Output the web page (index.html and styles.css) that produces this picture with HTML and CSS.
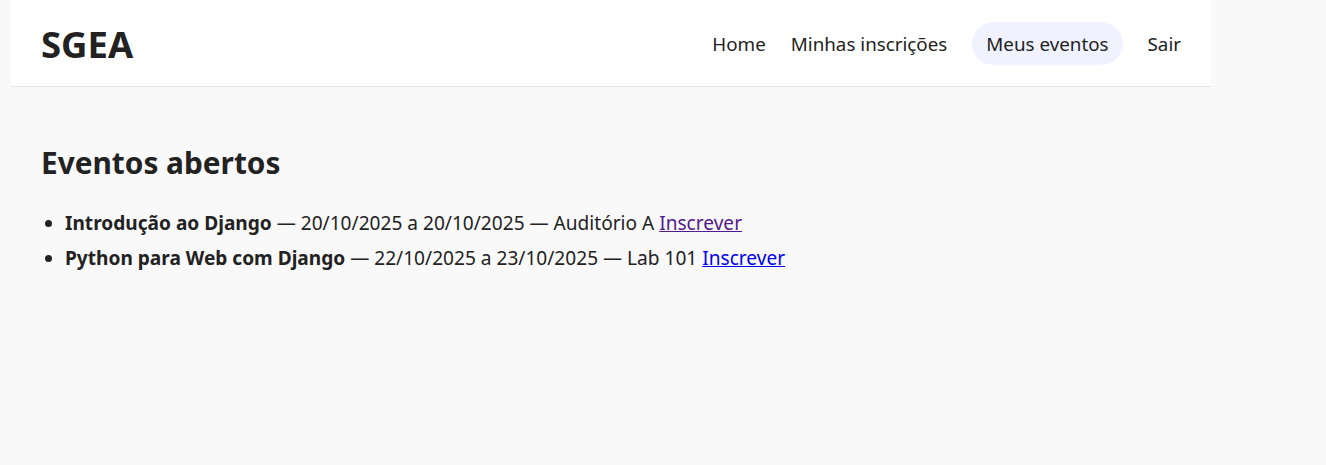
FILE: index.html
```html
<!DOCTYPE html>
<html lang="pt-BR">
<head>
<meta charset="utf-8">
<title>SGEA</title>
<link rel="stylesheet" href="styles.css">
</head>
<body>
<div class="page">
  <header class="topbar">
    <div class="brand">SGEA</div>
    <nav class="nav">
      <a class="nav-link" href="#">Home</a>
      <a class="nav-link" href="#">Minhas inscrições</a>
      <a class="nav-link active" href="#">Meus eventos</a>
      <a class="nav-link" href="#">Sair</a>
    </nav>
  </header>
  <main class="content">
    <h1 class="title">Eventos abertos</h1>
    <ul class="events">
      <li><strong>Introdução ao Django</strong> — 20/10/2025 a 20/10/2025 — Auditório A <a class="link visited" href="#">Inscrever</a></li>
      <li><strong>Python para Web com Django</strong> — 22/10/2025 a 23/10/2025 — Lab 101 <a class="link" href="#">Inscrever</a></li>
    </ul>
  </main>
</div>
</body>
</html>
```
FILE: styles.css
```css
html, body {
  margin: 0;
  padding: 0;
  background: #f9f9f9;
}
body {
  font-family: "Noto Sans", "Open Sans", sans-serif;
  color: #222;
}
.page {
  width: 1200px;
  margin-left: 11px;
}
.topbar {
  width: 1140px;
  height: 86px;
  background: #fff;
  border-bottom: 1px solid #e3e3e3;
  display: flex;
  align-items: center;
  justify-content: space-between;
  padding: 0 30px;
}
.brand {
  font-size: 36.5px;
  font-weight: 700;
  color: #222;
  padding-top: 2px;
}
.nav {
  display: flex;
  align-items: center;
  gap: 25px;
}
.nav-link {
  font-size: 18.8px;
  color: #222;
  text-decoration: none;
  height: 43px;
  padding-top: 2px;
  box-sizing: border-box;
  display: flex;
  align-items: center;
  border-radius: 22px;
}
.nav-link.active {
  background: #f0f3ff;
  padding: 2px 14px 0;
}
.content {
  padding: 55px 30px 0;
}
.title {
  margin: 0 0 23px;
  font-size: 29.8px;
  font-weight: 700;
}
.events {
  margin: 0;
  padding-left: 24px;
  font-size: 19.1px;
  line-height: 35px;
}
.link { color: #0000ee; }
.link.visited { color: #551a8b; }
```
